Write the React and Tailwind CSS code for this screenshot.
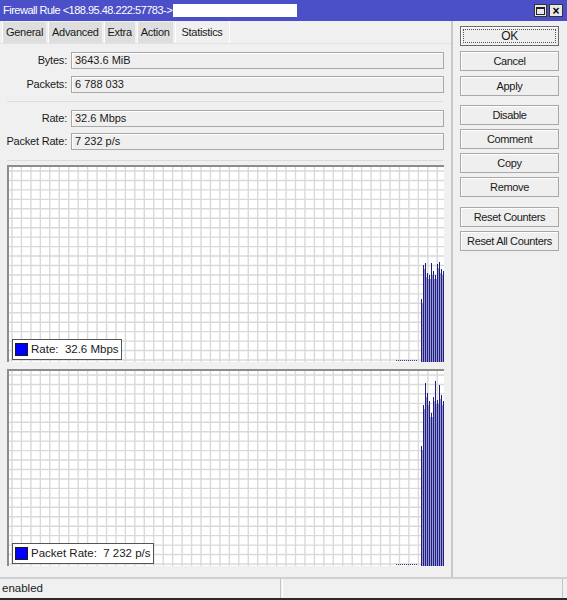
const FONT = { fontFamily: '"Liberation Sans", Arial, sans-serif' };

const Field = ({ label, value }) => (
  <div className="flex items-center h-[17px]">
    <div className="w-[67px] pr-[4px] text-right text-[11px] text-[#1a1a1a] whitespace-nowrap tracking-[-0.2px]">{label}</div>
    <div className="w-[373px] h-[17px] flex items-center px-[3px] text-[11px] text-[#1a1a1a] bg-[#efefef] border border-[#a8a8a8] shadow-[inset_1px_1px_0_#ffffff] whitespace-nowrap">
      {value}
    </div>
  </div>
);

const Btn = ({ label, focus }) => (
  <div
    className={`w-[99px] h-[20px] flex items-center justify-center text-[11px] tracking-[-0.35px] text-[#1a1a1a] bg-[#efefef] border whitespace-nowrap ${focus ? "border-[#6a6a6a]" : "border-[#a8a8a8]"} shadow-[inset_1px_1px_0_#ffffff]`}
  >
    {focus ? (
      <div className="w-[93px] h-[14px] flex items-center justify-center border border-dotted border-[#555] text-[12px]">{label}</div>
    ) : (
      label
    )}
  </div>
);

const Graph = ({ legend, tops, dots }) => {
  const W = 435;
  const H = 195;
  const cell = 9.45;
  const vx = [];
  for (let x = 3; x < W; x += cell) vx.push(x);
  const hy = [];
  for (let y = 4; y < H; y += cell) hy.push(y);
  const x0 = 412.5;
  const step = 2;
  const pts = tops.map((t, i) => [x0 + i * step, t]);
  return (
    <div className="relative w-[437px] h-[197px] bg-white border-t-2 border-l-2 border-[#8c8c8c]">
      <svg width={W} height={H} className="block">
        {vx.map((x, i) => (
          <line key={"v" + i} x1={x} y1={0} x2={x} y2={H} stroke="#d9d9d9" strokeWidth="1.4" />
        ))}
        {hy.map((y, i) => (
          <line key={"h" + i} x1={0} y1={y} x2={W} y2={y} stroke="#d9d9d9" strokeWidth="1.4" />
        ))}
        <line x1={dots[0]} y1={H - 1.5} x2={dots[1]} y2={H - 1.5} stroke="#3a3a7a" strokeWidth="1" strokeDasharray="1 1" />
        {pts.slice(0, -1).map(([x, y], i) => (
          <rect
            key={"f" + i}
            x={x + 0.5}
            y={Math.max(y, pts[i + 1][1]) + 4}
            width={1}
            height={H}
            fill="#9a9ad8"
            shapeRendering="crispEdges"
          />
        ))}
        {pts.map(([x, y], i) => (
          <line key={"b" + i} x1={x} y1={y} x2={x} y2={H} stroke="#20207a" strokeWidth="1" shapeRendering="crispEdges" />
        ))}
      </svg>
      <div className="absolute left-[3px] bottom-[2px] h-[21px] flex items-center gap-[3px] px-[2px] bg-white border border-[#555] text-[11.5px] text-[#1a1a1a] whitespace-nowrap">
        <div className="w-[13px] h-[13px] bg-[#0000ff] border border-[#1a1a1a]" />
        <span>{legend}</span>
      </div>
    </div>
  );
};

export default function App() {
  const tabs = ["General", "Advanced", "Extra", "Action"];
  return (
    <div className="w-[567px] h-[600px] flex flex-col bg-[#f0f0f0] overflow-hidden" style={FONT}>
      {/* title bar */}
      <div className="h-[21px] shrink-0 flex items-center bg-[#4b50c8] pl-[3px] pr-[4px]">
        <span className="text-[11px] text-white tracking-[-0.5px] whitespace-nowrap">Firewall Rule &lt;188.95.48.222:57783-&gt;</span>
        <div className="w-[124px] h-[13px] bg-white ml-[1px]" />
        <div className="flex-1" />
        <div className="w-[13px] h-[13px] bg-[#e8e8e8] border border-[#333] flex items-center justify-center mr-[2px]">
          <div className="w-[9px] h-[8px] border border-[#222] border-t-2" />
        </div>
        <div className="w-[14px] h-[13px] bg-[#e8e8e8] border border-[#333] flex items-center justify-center text-[12px] font-bold leading-none text-black">
          ×
        </div>
      </div>

      <div className="flex-1 flex min-h-0">
        {/* left panel */}
        <div className="w-[453px] flex flex-col border-r-2 border-r-[#c8c8c8]">
          <div className="h-[23px] flex items-end pl-[2px] border-b border-[#e2e2e2]">
            {tabs.map((t) => (
              <div
                key={t}
                className="h-[21px] px-[3px] mr-[2px] flex items-center text-[11px] tracking-[-0.3px] text-[#1a1a1a] bg-[#dedede] border-l border-white"
              >
                {t}
              </div>
            ))}
            <div className="h-[22px] px-[6px] flex items-start pt-[3px] text-[11px] tracking-[-0.3px] text-[#1a1a1a] bg-[#f0f0f0] border-r border-[#a0a0a0] border-l border-white">
              Statistics
            </div>
          </div>

          <div className="pt-[8px] flex flex-col">
            <div className="flex flex-col gap-[7px] pl-[4px]">
              <Field label="Bytes:" value="3643.6 MiB" />
              <Field label="Packets:" value="6 788 033" />
            </div>
            <div className="h-px bg-[#dcdcdc] ml-[7px] mr-[8px] mt-[8px] mb-[8px]" />
            <div className="flex flex-col gap-[6px] pl-[4px]">
              <Field label="Rate:" value="32.6 Mbps" />
              <Field label="Packet Rate:" value="7 232 p/s" />
            </div>
            <div className="h-px bg-[#dcdcdc] ml-[7px] mr-[8px] mt-[10px]" />
            <div className="pl-[7px] pt-[4px] flex flex-col gap-[7px]">
              <Graph
                legend={<>Rate:&nbsp; 32.6 Mbps</>}
                dots={[387, 409]}
                tops={[132, 98, 96, 106, 108, 96, 104, 108, 97, 95, 102, 104]}
              />
              <Graph
                legend={<>Packet Rate:&nbsp; 7 232 p/s</>}
                dots={[387, 409]}
                tops={[75, 34, 12, 22, 30, 42, 26, 10, 29, 14, 24, 30]}
              />
            </div>
          </div>
        </div>

        {/* right buttons */}
        <div className="pl-[7px] pt-[5px] flex flex-col">
          <div className="flex flex-col gap-[5px]">
            <Btn label="OK" focus />
            <Btn label="Cancel" />
            <Btn label="Apply" />
          </div>
          <div className="flex flex-col gap-[4px] mt-[9px]">
            <Btn label="Disable" />
            <Btn label="Comment" />
            <Btn label="Copy" />
            <Btn label="Remove" />
          </div>
          <div className="flex flex-col gap-[4px] mt-[10px]">
            <Btn label="Reset Counters" />
            <Btn label="Reset All Counters" />
          </div>
        </div>
      </div>

      {/* status bar */}
      <div className="h-[23px] shrink-0 flex border-t-2 border-[#d0d0d0] border-b-2 border-b-[#2a2a2a]">
        <div className="w-[281px] flex items-center pl-[2px] text-[11.5px] text-[#1a1a1a] border-r border-[#c4c4c4]">enabled</div>
        <div className="flex-1 ml-[1px] border-l border-white mr-[4px] border-r border-r-[#c4c4c4]" />
      </div>
    </div>
  );
}
